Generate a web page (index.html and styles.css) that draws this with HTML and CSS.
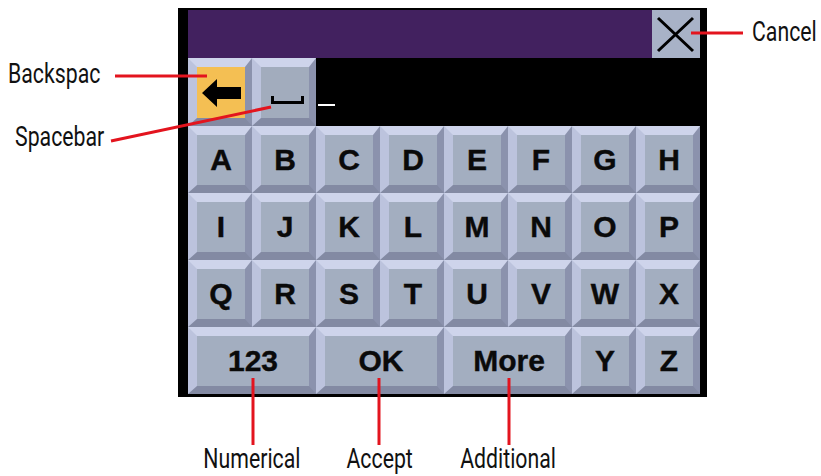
FILE: index.html
```html
<!DOCTYPE html>
<html>
<head>
<meta charset="utf-8">
<link rel="stylesheet" href="styles.css">
</head>
<body>
<div class="page">
  <div class="top">
    <div class="notes-left">
      <div class="note note-back"><span>Backspac</span></div>
      <div class="note note-space"><span>Spacebar</span></div>
    </div>
    <div class="device">
      <div class="titlebar">
        <div class="cancel">
          <svg width="48" height="48" viewBox="0 0 48 48"><path d="M6 8 L41 41 M41 8 L6 41" stroke="#000" stroke-width="3" fill="none"/></svg>
        </div>
      </div>
      <div class="entry">
        <div class="key key-back">
          <svg width="48" height="51" viewBox="0 0 48 51"><path d="M5 26 L20 12 L20 20 L44 20 L44 32 L20 32 L20 40 Z" fill="#000"/></svg>
        </div>
        <div class="key key-space">
          <svg width="48" height="51" viewBox="0 0 48 51"><path d="M11.5 29 L11.5 35.5 L41.5 35.5 L41.5 29" stroke="#000" stroke-width="3" fill="none"/></svg>
        </div>
        <div class="field"><span class="cursor"></span></div>
      </div>
      <div class="keys">
        <div class="key">A</div><div class="key">B</div><div class="key">C</div><div class="key">D</div>
        <div class="key">E</div><div class="key">F</div><div class="key">G</div><div class="key">H</div>
        <div class="key">I</div><div class="key">J</div><div class="key">K</div><div class="key">L</div>
        <div class="key">M</div><div class="key">N</div><div class="key">O</div><div class="key">P</div>
        <div class="key">Q</div><div class="key">R</div><div class="key">S</div><div class="key">T</div>
        <div class="key">U</div><div class="key">V</div><div class="key">W</div><div class="key">X</div>
        <div class="key wide">123</div><div class="key wide">OK</div><div class="key wide">More</div>
        <div class="key">Y</div><div class="key">Z</div>
      </div>
    </div>
    <div class="notes-right">
      <div class="note"><span>Cancel</span></div>
    </div>
  </div>
  <div class="notes-bottom">
    <div class="note"><span>Numerical</span></div>
    <div class="note"><span>Accept</span></div>
    <div class="note"><span>Additional</span></div>
  </div>
  <svg class="leaders" width="821" height="476" viewBox="0 0 821 476">
    <g stroke="#e3141e" stroke-width="3" fill="none">
      <line x1="115" y1="76" x2="207" y2="76"/>
      <line x1="111" y1="141" x2="271" y2="107"/>
      <line x1="691" y1="33" x2="743" y2="33"/>
      <line x1="253" y1="378" x2="253" y2="445"/>
      <line x1="379" y1="378" x2="379" y2="445"/>
      <line x1="509" y1="378" x2="509" y2="445"/>
    </g>
  </svg>
</div>
</body>
</html>
```
FILE: styles.css
```css
* { box-sizing: border-box; }
html, body { margin: 0; padding: 0; background: #fff; }
.page {
  position: relative;
  width: 821px;
  height: 476px;
  overflow: hidden;
}
.top {
  display: flex;
  padding-top: 8px;
}
.note {
  font-family: Roboto, "Liberation Sans", sans-serif;
  font-size: 28px;
  line-height: 30px;
  color: #111;
  white-space: nowrap;
}
.note span {
  display: inline-block;
  transform: scaleX(0.76);
  transform-origin: left center;
}
.notes-left {
  width: 178px;
  flex: none;
}
.note-back { margin: 51px 0 0 8px; }
.note-space { margin: 33px 0 0 15px; }
.notes-right {
  padding: 9px 0 0 45px;
}
.device {
  width: 529px;
  height: 389px;
  flex: none;
  background: #000;
  padding: 2px 7px 3px 10px;
  display: flex;
  flex-direction: column;
}
.titlebar {
  height: 48px;
  background: #42215f;
  display: flex;
  justify-content: flex-end;
}
.cancel {
  width: 48px;
  height: 48px;
  background: #a8b2c7;
}
.cancel svg { display: block; }
.entry {
  height: 68px;
  display: flex;
}
.field {
  flex: 1;
  background: #000;
  padding: 46px 0 0 2px;
}
.cursor {
  display: block;
  width: 17px;
  height: 2px;
  background: #fff;
}
.key {
  border-style: solid;
  border-width: 9px 7px 8px 9px;
  border-color: #ced4eb #8b92ad #838aa3 #bcc3dd;
  background: #a3aec0;
  display: flex;
  align-items: center;
  justify-content: center;
  font-family: "Liberation Sans", Arial, sans-serif;
  font-weight: bold;
  font-size: 30px;
  -webkit-text-stroke: 0.4px #0a0a0a;
  color: #0a0a0a;
}
.entry .key { width: 64px; height: 68px; }
.key svg { display: block; }
.key-back { background: #f4bf53; }
.key-space { background: #a2acbd; }
.keys {
  display: grid;
  grid-template-columns: repeat(8, 64px);
  grid-auto-rows: 67px;
}
.keys .wide { grid-column: span 2; }
.notes-bottom {
  display: grid;
  grid-template-columns: repeat(3, 128px);
  margin-left: 188px;
  padding-top: 48px;
}
.notes-bottom .note { text-align: center; line-height: 28px; }
.notes-bottom .note span { transform-origin: center center; }
.leaders {
  position: absolute;
  left: 0;
  top: 0;
  pointer-events: none;
}
```
